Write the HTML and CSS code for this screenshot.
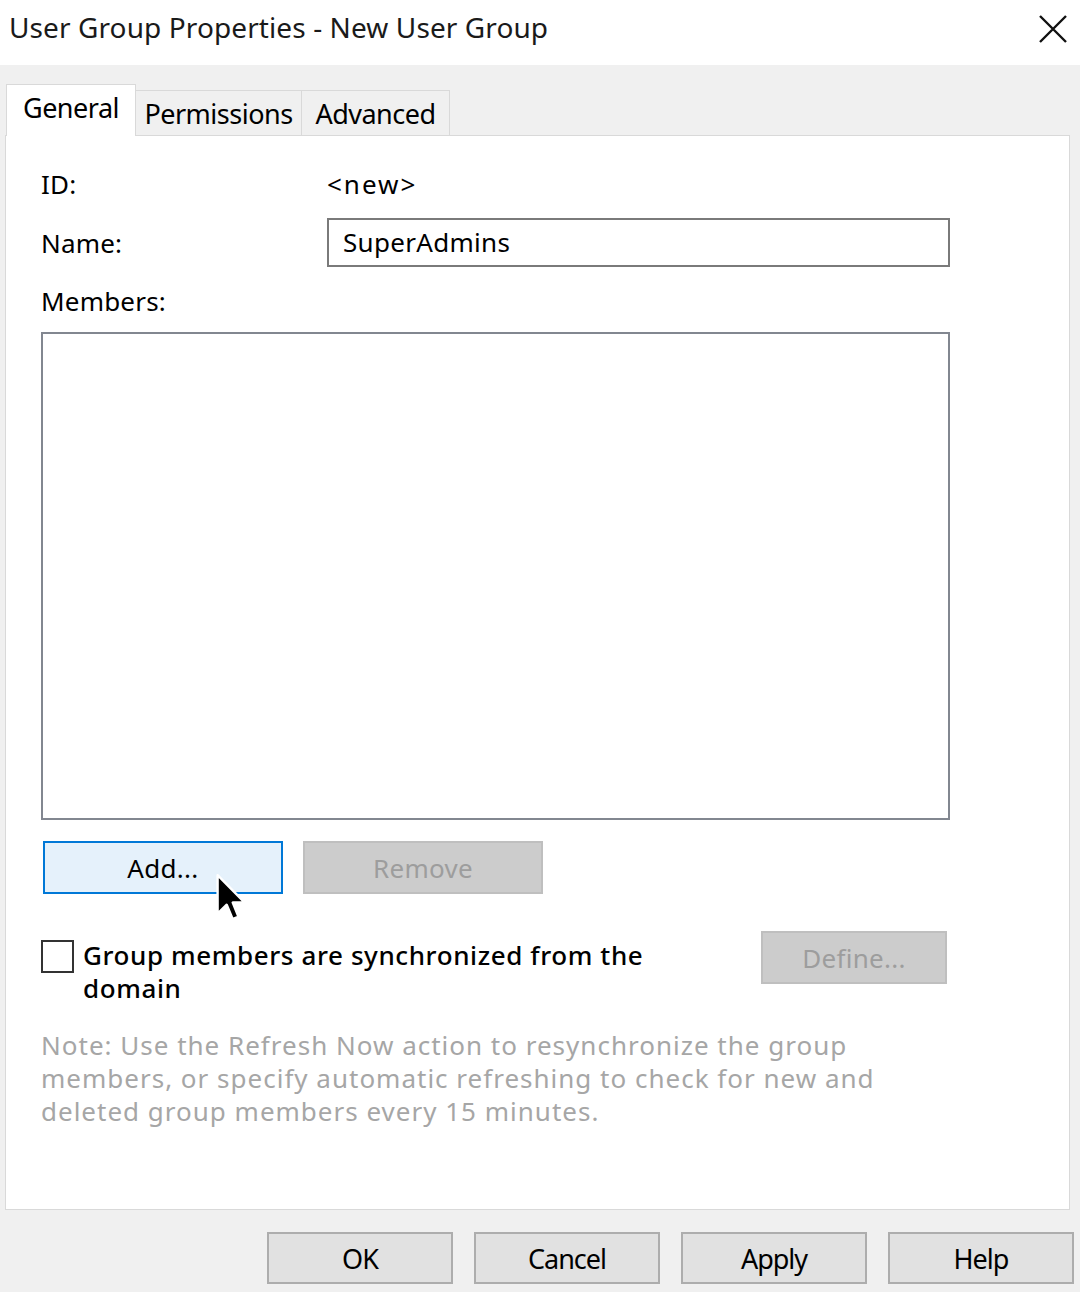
FILE: index.html
```html
<!DOCTYPE html>
<html lang="en">

<head>
    <meta charset="UTF-8">
    <title>User Group Properties - New User Group</title>
    <link rel="stylesheet" href="styles.css">
</head>

<body>
    <div class="titlebar">
        <div class="title">User Group Properties - New User Group</div>
        <svg class="close" width="30" height="30" viewBox="0 0 30 30">
            <path d="M2 2 L28 28 M28 2 L2 28" stroke="#111" stroke-width="2.4" fill="none" />
        </svg>
    </div>

    <div class="tabs">
        <div class="tab active">General</div>
        <div class="tab">Permissions</div>
        <div class="tab">Advanced</div>
    </div>

    <div class="panel">
        <div class="row row-id">
            <div class="label">ID:</div>
            <div class="value">&lt;new&gt;</div>
        </div>
        <div class="row row-name">
            <div class="label">Name:</div>
            <div class="textbox">SuperAdmins</div>
        </div>
        <div class="label members-label">Members:</div>
        <div class="listbox"></div>

        <div class="btn-row">
            <div class="btn btn-focus">Add...
                <svg class="cursor" width="32" height="48" viewBox="0 0 13 20">
                    <path d="M0.5 0.5 L0.5 16.5 L4.3 12.8 L6.8 18.8 L9.2 17.8 L6.8 11.9 L11.8 11.9 Z"
                        fill="#000" stroke="#fff" stroke-width="1" stroke-linejoin="round" />
                </svg>
            </div>
            <div class="btn btn-disabled">Remove</div>
        </div>

        <div class="sync-row">
            <div class="checkbox"></div>
            <div class="sync-text">Group members are synchronized from the domain</div>
            <div class="btn btn-disabled btn-define">Define...</div>
        </div>

        <p class="note">Note: Use the Refresh Now action to resynchronize the group members, or specify automatic
            refreshing to check for new and deleted group members every 15 minutes.</p>
    </div>

    <div class="footer">
        <div class="btn btn-footer">OK</div>
        <div class="btn btn-footer">Cancel</div>
        <div class="btn btn-footer">Apply</div>
        <div class="btn btn-footer">Help</div>
    </div>
</body>

</html>
```

FILE: styles.css
```css
* {
    margin: 0;
    padding: 0;
    box-sizing: border-box;
}

body {
    width: 1080px;
    height: 1292px;
    overflow: hidden;
    background-color: #f0f0f0;
    font-family: "Noto Sans", "Open Sans", sans-serif;
    font-size: 26px;
    color: #000;
}

.titlebar {
    height: 65px;
    background: #fff;
    display: flex;
    align-items: center;
    justify-content: space-between;
    padding: 0 12px 12px 9px;
}

.title {
    font-size: 28px;
    color: #1a1a1a;
    letter-spacing: 0.1px;
}

.close {
    margin-top: 4px;
}

.tabs {
    display: flex;
    align-items: flex-end;
    margin: 19px 0 0 6px;
    position: relative;
    z-index: 1;
}

.tab {
    height: 45px;
    padding: 0 10px;
    border: 1px solid #d9d9d9;
    border-bottom: none;
    border-left: none;
    background: #f0f0f0;
    display: flex;
    align-items: center;
    justify-content: center;
    font-size: 27px;
    letter-spacing: -0.5px;
}

.tab:nth-child(2) {
    width: 166px;
}

.tab:nth-child(3) {
    width: 148px;
}

.tab.active {
    width: 130px;
    height: 52px;
    margin-bottom: -1px;
    background: #fff;
    border-left: 1px solid #d9d9d9;
    padding-bottom: 6px;
}

.panel {
    margin: 0 10px 0 5px;
    height: 1075px;
    background: #fff;
    border: 1px solid #d9d9d9;
    padding: 31px 0 0 35px;
}

.row {
    display: flex;
    align-items: center;
}

.label {
    width: 286px;
    line-height: 34px;
    letter-spacing: 0.2px;
}

.row-id {
    height: 34px;
}

.value {
    line-height: 34px;
    letter-spacing: 2px;
}

.row-name {
    margin-top: 17px;
    height: 49px;
}

.textbox {
    width: 623px;
    height: 49px;
    border: 2px solid #7a7a7a;
    padding-left: 14px;
    line-height: 45px;
    letter-spacing: 0.3px;
}

.members-label {
    margin-top: 17px;
}

.listbox {
    margin-top: 14px;
    width: 909px;
    height: 488px;
    border: 2px solid #828790;
}

.btn-row {
    display: flex;
    gap: 20px;
    margin-top: 21px;
    padding-left: 2px;
}

.btn {
    width: 240px;
    height: 53px;
    display: flex;
    align-items: center;
    justify-content: center;
    border: 2px solid #adadad;
    background: #e1e1e1;
    position: relative;
    letter-spacing: 0.3px;
}

.btn-focus {
    background: #e5f1fb;
    border-color: #0078d7;
}

.btn-disabled {
    background: #cccccc;
    border-color: #bfbfbf;
    color: #9d9d9d;
}

.cursor {
    position: absolute;
    left: 171px;
    top: 31px;
}

.sync-row {
    display: flex;
    align-items: flex-start;
    margin-top: 37px;
}

.checkbox {
    width: 33px;
    height: 33px;
    border: 2px solid #333;
    margin-top: 9px;
    flex-shrink: 0;
}

.sync-text {
    width: 580px;
    margin-left: 9px;
    margin-top: 8px;
    line-height: 33px;
    font-weight: 500;
    letter-spacing: 0.6px;
}

.btn-define {
    width: 186px;
    height: 53px;
    margin-left: 98px;
}

.note {
    width: 880px;
    margin-top: 24px;
    color: #a6a6a6;
    line-height: 33px;
    font-size: 26px;
    letter-spacing: 1px;
}

.footer {
    display: flex;
    justify-content: flex-end;
    gap: 21px;
    margin-top: 22px;
    padding-right: 6px;
}

.btn-footer {
    width: 186px;
    height: 52px;
    font-size: 27px;
    letter-spacing: -1px;
}
```
